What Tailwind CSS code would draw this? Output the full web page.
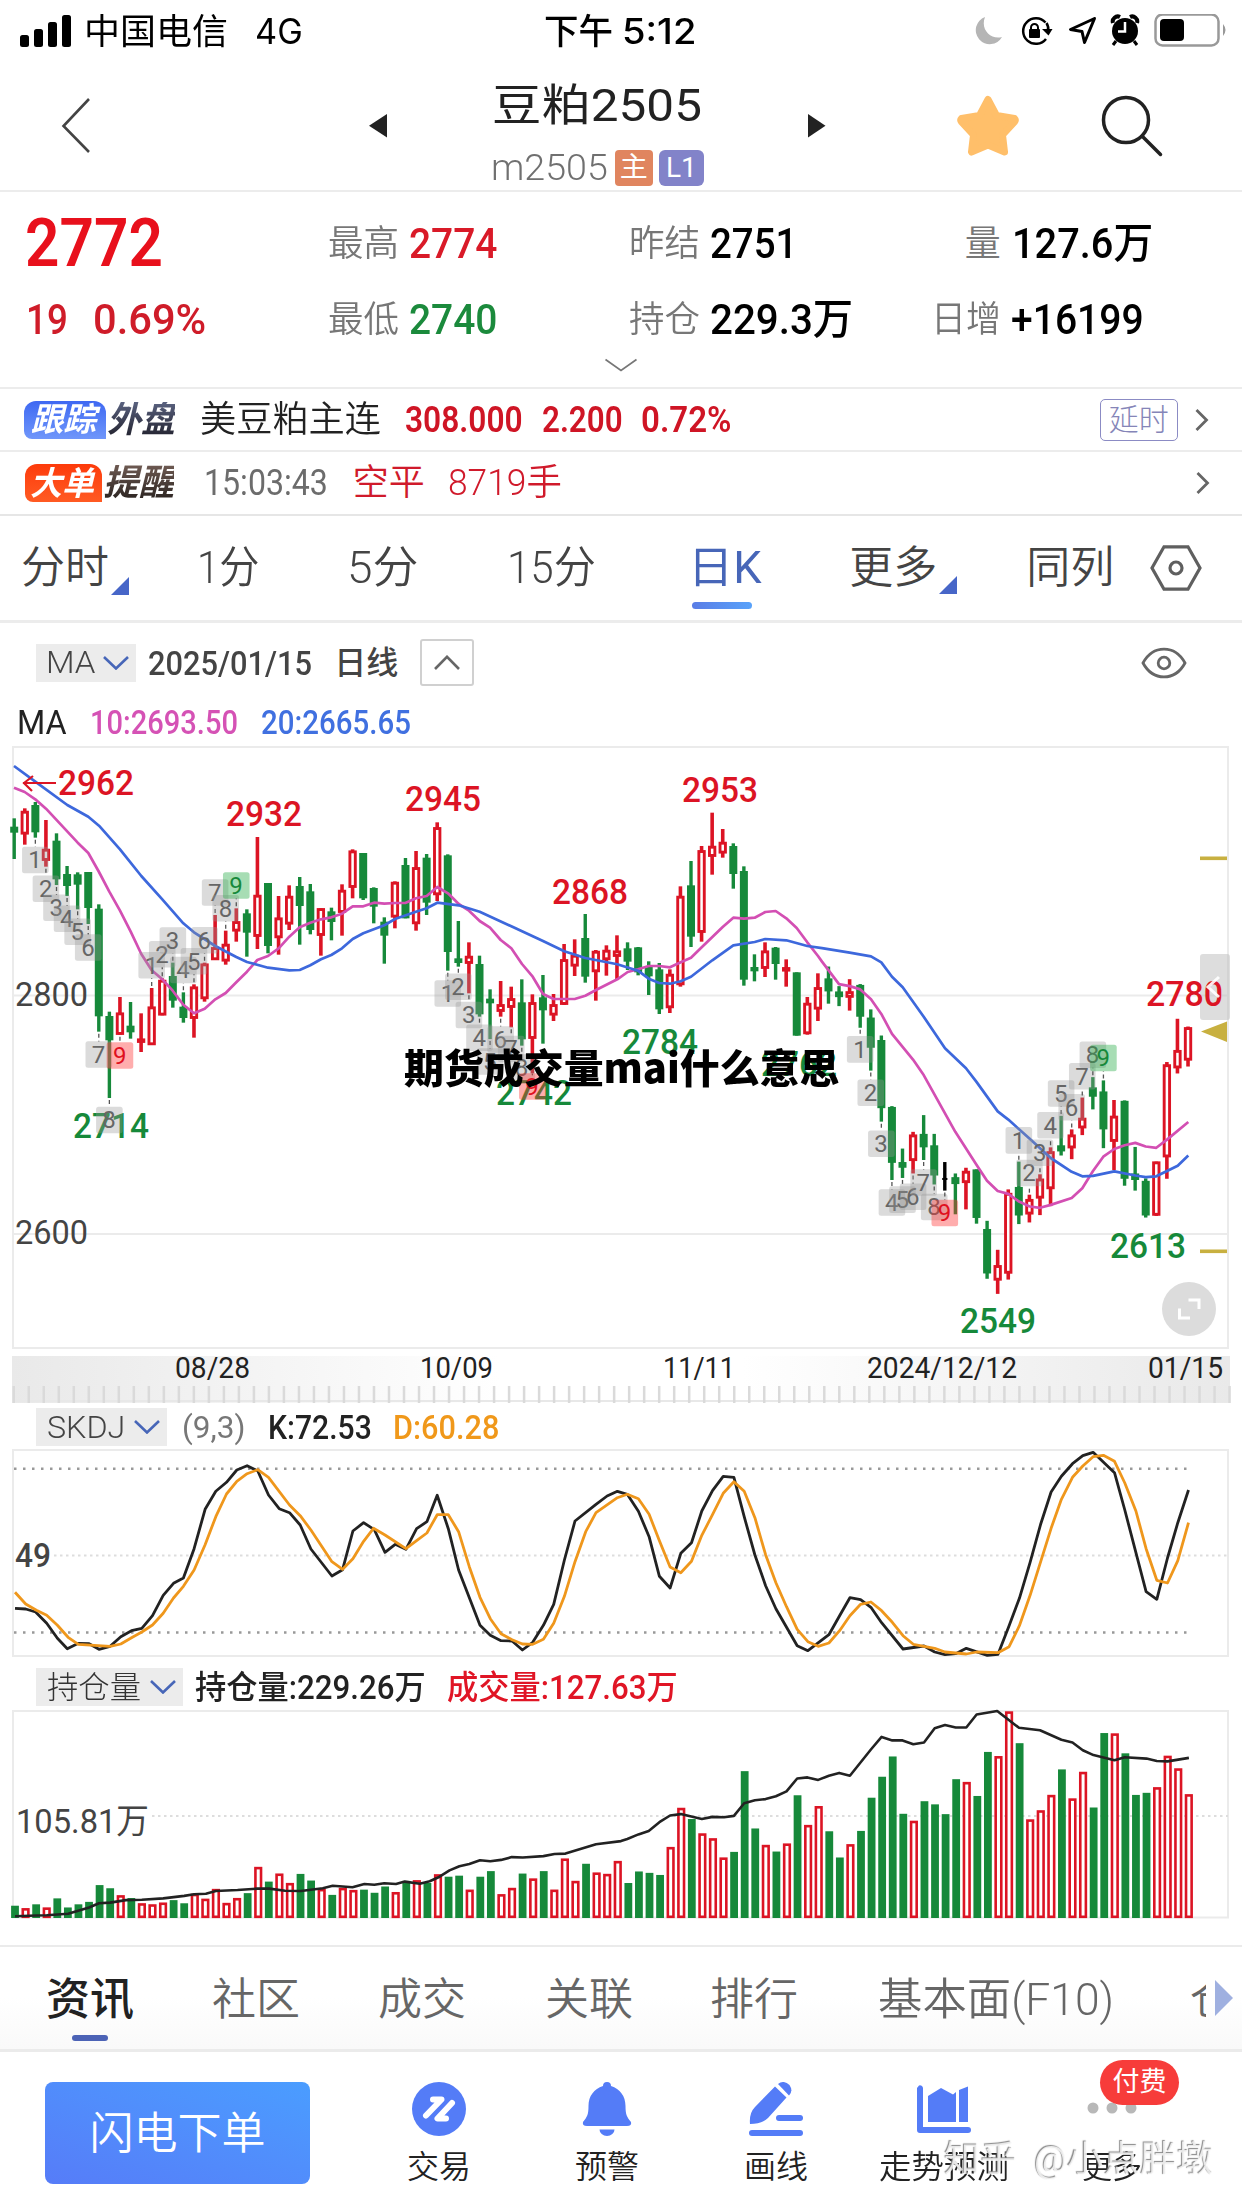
<!DOCTYPE html>
<html lang="zh-CN">
<head>
<meta charset="utf-8">
<title>豆粕2505</title>
<script src="https://cdn.jsdelivr.net/npm/@tailwindcss/browser@4"></script>
</head>
<body class="bg-white">
<div id="app" class="relative flex h-[2208px] w-[1242px] flex-col overflow-hidden bg-white font-[Roboto,'Noto_Sans_CJK_SC',sans-serif] leading-none text-[#222]">

  <!-- status bar -->
  <div class="flex h-[62px] shrink-0 items-center font-[Inter,'Noto_Sans_CJK_SC',sans-serif] text-[35px] text-black">
    <svg class="ml-5 shrink-0" width="52" height="32" viewBox="0 0 52 32"><rect x="0" y="20" width="9" height="12" rx="2.5"/><rect x="14" y="14" width="9" height="18" rx="2.5"/><rect x="28" y="7" width="9" height="25" rx="2.5"/><rect x="42" y="0" width="9" height="32" rx="2.5"/></svg>
    <span data-w="144" class="ml-[12px]">中国电信</span>
    <span data-w="48" class="ml-[27px]">4G</span>
    <span data-w="69" class="ml-[241px] font-medium">下午</span>
    <span data-w="74" class="ml-[9px] font-medium">5:12</span>
    <svg class="ml-[278px] shrink-0" width="254" height="34" viewBox="973 14 254 34">
      <path d="M984 17 A14 14 0 1 0 1001 37 C990 40 979 30 984 17Z" fill="#b5b5b5"/>
      <path d="M1044.500 22.500 A12.800 12.800 0 1 0 1045 39" fill="none" stroke="#000" stroke-width="2.500"/><path d="M1041 29h10.500l-4 6.500z"/><path d="M1045.500 23 Q1048 27 1047 31" fill="none" stroke="#000" stroke-width="2.500"/>
      <rect x="1028" y="29" width="11" height="9" rx="1"/><path d="M1030 30v-2.500a3.500 3.500 0 0 1 7 0V30" fill="none" stroke="#000" stroke-width="2"/>
      <path d="M1093.500 18.500 L1069.500 29.500 L1081 31.500 L1083.500 42.500 Z" fill="none" stroke="#000" stroke-width="3" stroke-linejoin="round"/>
      <circle cx="1124" cy="31" r="13"/><path d="M1112 23a5 5 0 0 1 7-6M1136 23a5 5 0 0 0-7-6" fill="none" stroke="#000" stroke-width="4"/><path d="M1115 41l-3 4M1133 41l3 4" stroke="#000" stroke-width="3"/><path d="M1124 22v9.500h-7" fill="none" stroke="#fff" stroke-width="2.500"/>
      <rect x="1154.500" y="14.500" width="63" height="31" rx="7" fill="none" stroke="#999" stroke-width="2.500"/><rect x="1159" y="19" width="24" height="22" rx="4"/><path d="M1222 24q5 6 0 12z" fill="#999"/>
    </svg>
  </div>

  <!-- title bar -->
  <div class="flex h-[130px] shrink-0 items-start border-b-2 border-[#ececec]">
    <svg class="ml-[58px] mt-[32px] shrink-0" width="36" height="64" viewBox="58 94 36 64"><path d="M89 99L63.500 126 89 152" fill="none" stroke="#444" stroke-width="2.600"/></svg>
    <svg class="ml-[275px] mt-[52px] shrink-0" width="18" height="24" viewBox="0 0 18 24"><path d="M18 0v23.500L0 11.700z" fill="#222"/></svg>
    <div class="ml-[104px] mt-[22px] flex w-[215px] shrink-0 flex-col items-start">
      <span data-w="210" class="ml-[1px] text-[44px] font-normal">豆粕2505</span>
      <div class="mt-[21px] flex h-[37px] items-center text-[36px] text-[#707070]">
        <span data-w="117" class="font-light">m2505</span>
        <span class="ml-[7px] flex h-[36px] w-[38px] items-center justify-center rounded-[4px] bg-[#e0855f] text-[28px] text-white">主</span>
        <span class="ml-[6px] flex h-[36px] w-[45px] items-center justify-center rounded-[6px] bg-[#8283c9] text-[28px] text-white">L1</span>
      </div>
    </div>
    <svg class="ml-[102px] mt-[52px] shrink-0" width="18" height="24" viewBox="0 0 18 24"><path d="M0 0v23.500L17.500 11.700z" fill="#222"/></svg>
    <svg class="ml-[130px] mt-[31px] shrink-0" width="64" height="66" viewBox="956 93 64 66"><path d="M988 99.500 L996.500 115.500 L1014.500 118.500 Q1016 120 1014.500 122 L1002.500 135 L1004.500 152 L988 145 L971.500 152 L973.500 135 L961.500 122 Q960 120 961.500 118.500 L979.500 115.500 Z" fill="#ffbf6a" stroke="#ffbf6a" stroke-width="7" stroke-linejoin="round"/></svg>
    <svg class="ml-[80px] mt-[31px] shrink-0" width="66" height="66" viewBox="1100 93 66 66"><circle cx="1126" cy="120" r="22.500" fill="none" stroke="#222" stroke-width="3.500"/><path d="M1142 136L1160.500 154.500" stroke="#222" stroke-width="3.500" stroke-linecap="round"/></svg>
  </div>

  <!-- quote summary -->
  <div class="flex h-[197px] shrink-0 flex-col border-b-2 border-[#ececec]">
    <div class="mt-[17px] flex h-[70px] items-center text-[42px] font-semibold">
      <span data-w="138" class="ml-[25px] text-[66px] text-[#e8101c]">2772</span>
      <span data-w="71" class="ml-[165px] text-[36px] font-[350] text-[#777]">最高</span>
      <span data-w="88" class="ml-[10px] font-medium text-[#d91a28]">2774</span>
      <span data-w="71" class="ml-[132px] text-[36px] font-[350] text-[#777]">昨结</span>
      <span data-w="87" class="ml-[10px] font-medium text-black">2751</span>
      <span data-w="36" class="ml-[167px] text-[36px] font-[350] text-[#777]">量</span>
      <span data-w="141" class="ml-[11px] font-medium text-black">127.6万</span>
    </div>
    <div class="mt-[8px] flex h-[66px] items-center text-[42px] font-medium">
      <span data-w="42" class="ml-[26px] text-[#cf1c29]">19</span>
      <span data-w="113" class="ml-[25px] text-[#cf1c29]">0.69%</span>
      <span data-w="71" class="ml-[122px] text-[36px] font-[350] text-[#777]">最低</span>
      <span data-w="88" class="ml-[10px] text-[#1b8a3c]">2740</span>
      <span data-w="71" class="ml-[132px] text-[36px] font-[350] text-[#777]">持仓</span>
      <span data-w="143" class="ml-[10px] text-black">229.3万</span>
      <span data-w="70" class="ml-[77px] text-[36px] font-[350] text-[#777]">日增</span>
      <span data-w="133" class="ml-[10px] text-black">+16199</span>
    </div>
    <svg class="ml-[604px] mt-[5px] shrink-0" width="34" height="15" viewBox="0 0 34 15"><path d="M1.500 1.500L17 12.500 32.500 1.500" fill="none" stroke="#777" stroke-width="1.700"/></svg>
  </div>

  <!-- overseas tracking -->
  <div class="flex h-[63px] shrink-0 items-center border-b-2 border-[#ececec] text-[36px]">
    <div class="ml-[24px] flex h-[38px] w-[82px] shrink-0 items-center rounded-tl-[12px] rounded-bl-[8px] rounded-tr-[12px] bg-linear-to-b from-[#3f68f2] to-[#7096fa] text-[33px] font-bold text-white"><span data-w="65" class="ml-[7px] italic">跟踪</span></div>
    <span data-w="68" class="ml-[1px] bg-linear-to-b from-[#5a6280] to-[#22222e] bg-clip-text text-[36px] font-bold text-transparent italic">外盘</span>
    <span data-w="181" class="ml-[25px] font-[350]">美豆粕主连</span>
    <span data-w="118" class="ml-[24px] font-semibold text-[#cf1525]">308.000</span>
    <span data-w="81" class="ml-[19px] font-semibold text-[#cf1525]">2.200</span>
    <span data-w="91" class="ml-[19px] font-semibold text-[#cf1525]">0.72%</span>
    <span class="ml-[368px] flex h-[42px] w-[78px] shrink-0 items-center justify-center rounded-[5px] border-[1.500px] border-[#8b8bc4] text-[30px] font-light text-[#8585b8]">延时</span>
    <svg class="ml-[17px] shrink-0" width="14" height="24" viewBox="0 0 14 24"><path d="M1.500 2L11.500 12 1.500 22" fill="none" stroke="#666" stroke-width="2.800"/></svg>
  </div>

  <!-- large orders -->
  <div class="flex h-[64px] shrink-0 items-center border-b-2 border-[#e6e6e6] text-[36px]">
    <div class="ml-[25px] flex h-[38px] w-[77px] shrink-0 items-center rounded-tl-[12px] rounded-bl-[8px] rounded-tr-[12px] bg-linear-to-b from-[#fd3a0a] to-[#ff5a22] text-[33px] font-bold text-white"><span data-w="64" class="ml-[5px] italic">大单</span></div>
    <span data-w="71" class="ml-[1px] bg-linear-to-b from-[#6e5a52] to-[#2a2320] bg-clip-text text-[36px] font-bold text-transparent italic">提醒</span>
    <span data-w="124" class="ml-[30px] text-[#6c6c6c]">15:03:43</span>
    <span data-w="72" class="ml-[25px] font-[350] text-[#d01a2b]">空平</span>
    <span data-w="114" class="ml-[23px] font-[350] text-[#d01a2b]">8719手</span>
    <svg class="ml-[634px] shrink-0" width="14" height="24" viewBox="0 0 14 24"><path d="M1.500 2L11.500 12 1.500 22" fill="none" stroke="#666" stroke-width="2.800"/></svg>
  </div>

  <!-- period tabs -->
  <div class="flex h-[107px] shrink-0 items-center border-b-[3px] border-[#ececec] text-[44px] font-[350] text-[#444]">
    <span data-w="88" class="ml-[21px]">分时</span>
    <svg class="ml-[2px] mt-[36px] shrink-0" width="18" height="18"><path d="M18 0v18H0z" fill="#4766c8"/></svg>
    <span data-w="62" class="ml-[68px]">1分</span>
    <span data-w="71" class="ml-[88px]">5分</span>
    <span data-w="89" class="ml-[88px]">15分</span>
    <div class="relative ml-[92px] shrink-0 font-normal text-[#4766b8]"><span data-w="74">日K</span><div class="absolute top-[56px] left-[4px] h-[7px] w-[60px] rounded-full bg-linear-to-r from-[#5a7de6] to-[#58a2fa]"></div></div>
    <span data-w="88" class="ml-[88px]">更多</span>
    <svg class="ml-[2px] mt-[34px] shrink-0" width="18" height="18"><path d="M18 0v18H0z" fill="#4766c8"/></svg>
    <span data-w="88" class="ml-[69px]">同列</span>
    <svg class="ml-[36px] shrink-0" width="52" height="46" viewBox="0 0 52 46"><path d="M14 1.800H38L50 23 38 44.200H14L2 23Z" fill="none" stroke="#5f5f5f" stroke-width="3.200"/><circle cx="26" cy="23" r="6" fill="none" stroke="#5f5f5f" stroke-width="3.200"/></svg>
  </div>

  <!-- chart heading -->
  <div class="flex h-[79px] shrink-0 items-center text-[34px] text-[#444]">
    <div class="ml-[36px] flex h-[38px] w-[100px] shrink-0 items-center bg-[#ececec]"><span data-w="49" class="ml-[10px] text-[31px] font-light">MA</span><svg class="ml-[8px] shrink-0" width="26" height="14" viewBox="0 0 26 14"><path d="M1 1L13 12.500 25 1" fill="none" stroke="#4766b8" stroke-width="2.600"/></svg></div>
    <span data-w="164" class="ml-[12px] font-medium">2025/01/15</span>
    <span data-w="64" class="ml-[22px] text-[32px] font-medium">日线</span>
    <span class="ml-[22px] flex h-[47px] w-[54px] shrink-0 items-center justify-center rounded-[3px] border-2 border-[#d0d0d0]"><svg width="26" height="15" viewBox="0 0 26 15"><path d="M1 14L13 1.800 25 14" fill="none" stroke="#666" stroke-width="2.600"/></svg></span>
    <svg class="ml-[667px] shrink-0" width="46" height="32" viewBox="0 0 46 32"><path d="M2 16C12-2.500 34-2.500 44 16C34 34.500 12 34.500 2 16Z" fill="none" stroke="#666" stroke-width="2.800"/><circle cx="23" cy="16" r="5.800" fill="none" stroke="#666" stroke-width="2.800"/></svg>
  </div>
  <div class="mb-[4px] flex h-[40px] shrink-0 items-center text-[33px]">
    <span data-w="50" class="ml-[17px]">MA</span>
    <span data-w="148" class="ml-[23px] font-medium text-[#d552b5]">10:2693.50</span>
    <span data-w="150" class="ml-[23px] font-medium text-[#4070e0]">20:2665.65</span>
  </div>

  <!-- candlestick panel, date ruler -->
  <svg id="main" class="block shrink-0" width="1242" height="661" viewBox="0 746 1242 661"></svg>

  <!-- SKDJ -->
  <div class="flex h-[40px] shrink-0 items-center text-[33px]">
    <div class="ml-[36px] flex h-[38px] w-[131px] shrink-0 items-center bg-[#ececec] text-[#444]"><span data-w="78" class="ml-[11px] text-[31px] font-light">SKDJ</span><svg class="ml-[9px] shrink-0" width="26" height="14" viewBox="0 0 26 14"><path d="M1 1L13 12.500 25 1" fill="none" stroke="#4766b8" stroke-width="2.600"/></svg></div>
    <span data-w="63" class="ml-[15px] text-[31px] text-[#777]">(9,3)</span>
    <span data-w="104" class="ml-[23px] font-medium">K:72.53</span>
    <span data-w="106" class="ml-[21px] font-medium text-[#f0981a]">D:60.28</span>
  </div>
  <svg id="skdj" class="block shrink-0" width="1242" height="220" viewBox="0 1447 1242 220"></svg>

  <!-- open interest / volume -->
  <div class="flex h-[40px] shrink-0 items-center text-[33px]">
    <div class="ml-[36px] flex h-[38px] w-[147px] shrink-0 items-center bg-[#ececec] text-[#333]"><span data-w="94" class="ml-[11px] text-[31px] font-light">持仓量</span><svg class="ml-[9px] shrink-0" width="26" height="14" viewBox="0 0 26 14"><path d="M1 1L13 12.500 25 1" fill="none" stroke="#4766b8" stroke-width="2.600"/></svg></div>
    <span data-w="231" class="ml-[12px] font-medium">持仓量:229.26万</span>
    <span data-w="231" class="ml-[21px] font-medium text-[#e01525]">成交量:127.63万</span>
  </div>
  <svg id="vol" class="block shrink-0" width="1242" height="238" viewBox="0 1707 1242 238"></svg>

  <!-- section tabs -->
  <div class="relative flex h-[107px] shrink-0 items-center border-t-2 border-b-[3px] border-[#ebebeb] bg-linear-to-b from-white from-50% to-[#f9f9f9] pt-[4px] text-[44px] font-[350] text-[#666]">
    <span data-w="88" class="ml-[46px] font-medium text-[#222]">资讯</span>
    <span data-w="88" class="ml-[78px]">社区</span>
    <span data-w="88" class="ml-[78px]">成交</span>
    <span data-w="88" class="ml-[79px]">关联</span>
    <span data-w="88" class="ml-[77px]">排行</span>
    <span data-w="236" class="ml-[80px]">基本面(F10)</span>
    <span class="ml-[76px] w-[16px] shrink-0 overflow-hidden whitespace-nowrap">仓</span>
    <svg class="-mt-[4px] ml-[9px] shrink-0" width="18" height="36" viewBox="0 0 18 36"><path d="M0 0L18 18 0 36z" fill="#9fb0e0"/></svg>
    <div class="absolute bottom-[8px] left-[72px] h-[6px] w-[36px] rounded-full bg-[#4c63b6]"></div>
  </div>

  <!-- bottom actions -->
  <div class="flex h-[157px] shrink-0 items-start text-[32px] text-[#222]">
    <div class="ml-[45px] mt-[30px] flex h-[102px] w-[265px] shrink-0 items-center justify-center rounded-[8px] bg-linear-to-tr from-[#567cf8] to-[#4a9dff] pt-[2px] text-[44px] font-[350] text-white">闪电下单</div>
    <div class="ml-[89px] mt-[30px] flex w-[80px] shrink-0 flex-col items-center">
      <svg width="54" height="54" viewBox="412 2082 54 54"><circle cx="439" cy="2109" r="27" fill="#547cf7"/><path d="M433 2099.500H441.500L426 2115.500M452 2103L437.500 2118.500H446" fill="none" stroke="#fff" stroke-width="6" stroke-linecap="round" stroke-linejoin="round"/></svg>
      <span class="mt-[15px] font-[350]">交易</span>
    </div>
    <div class="ml-[88px] mt-[30px] flex w-[80px] shrink-0 flex-col items-center">
      <svg width="50" height="54" viewBox="0 0 50 54"><path d="M21 4a4 4 0 0 1 8 0C38 7 43.500 14 43.500 24C43.500 33 45 35 49 40Q50 44 45 44H5Q0 44 1 40C5 35 6.500 33 6.500 24C6.500 14 12 7 21 4Z" fill="#547cf7"/><path d="M17.500 47.500h15a7.500 6.500 0 0 1-15 0z" fill="#547cf7"/></svg>
      <span class="mt-[15px] font-[350]">预警</span>
    </div>
    <div class="ml-[89px] mt-[30px] flex w-[80px] shrink-0 flex-col items-center">
      <svg width="54" height="54" viewBox="749 2082 54 54"><g fill="#547cf7"><path d="M775 2086.500L786.500 2097.500L768 2118Q762 2124 750 2124Q749 2113 755 2107Z"/><path d="M778 2084Q784 2079.500 789.500 2085Q793.500 2091 789 2095.500Z"/><rect x="776" y="2115" width="27" height="6" rx="3"/><rect x="749" y="2130" width="54" height="6" rx="3"/></g></svg>
      <span class="mt-[15px] font-[350]">画线</span>
    </div>
    <div class="ml-[58px] mt-[30px] flex w-[140px] shrink-0 flex-col items-center">
      <svg width="54" height="54" viewBox="917 2082 54 54"><g fill="#547cf7"><path d="M919 2085.500a3 3 0 0 1 4 2.500v39h45a3 3 0 0 1 0 6H920a3 3 0 0 1-3-3v-42z"/><path d="M928 2096L941 2088 953 2094.500 956 2092V2122H928z"/><path d="M959 2090L968 2086.500V2122H959z"/></g></svg>
      <span data-w="130" class="mt-[15px] font-[350]">走势预测</span>
    </div>
    <div class="relative ml-[58px] mt-[30px] flex w-[80px] shrink-0 flex-col items-center">
      <svg width="54" height="54" viewBox="0 0 54 54"><g fill="#b8b8b8"><circle cx="8" cy="26" r="5.500"/><circle cx="27" cy="26" r="5.500"/><circle cx="46" cy="26" r="5.500"/></g></svg>
      <span data-w="60" class="mt-[15px] font-[350]">更多</span>
      <span class="absolute -top-[22px] left-[28px] flex h-[45px] w-[79px] items-center justify-center rounded-full bg-[#f73c3a] text-[27px] text-white">付费</span>
    </div>
  </div>

  <!-- overlays -->
  <div class="absolute top-[1046px] left-[404px] font-['Noto_Sans_CJK_SC',sans-serif] text-[40px] leading-[40px] font-black whitespace-nowrap text-black"><span data-w="435">期货成交量mai什么意思</span></div>
  <div class="absolute top-[2140px] left-[944px] flex text-[36px] leading-[40px] whitespace-nowrap text-white/80 [text-shadow:-1px_-1px_1px_#8a8a8a]"><span data-w="73">知乎</span><span data-w="179" class="ml-[17px]">@小点胖墩</span></div>
</div>

<script>
// Squeeze each label horizontally to its column width, again whenever its natural width changes.
function fit(el) {
  var w = +el.dataset.w, n = el.offsetWidth, p = getComputedStyle(el.parentNode);
  if (!n) return;
  var centred = p.alignItems === 'center' && p.flexDirection === 'column';
  el.style.transformOrigin = centred ? 'center' : 'left';
  el.style.transform = 'scaleX(' + w / n + ')';
  el.style.marginRight = centred ? '' : (w - n) + 'px';
}
var watcher = new ResizeObserver(function (list) { list.forEach(function (e) { fit(e.target); }); });
var labels = document.querySelectorAll('[data-w]');
labels.forEach(function (el) {
  el.style.display = 'inline-block';
  el.style.whiteSpace = 'nowrap';
  el.style.flexShrink = '0';
  watcher.observe(el);
});
window.addEventListener('load', function () { labels.forEach(fit); });

var RED = '#dc1424', GREEN = '#16893a', X0 = 14.2, DX = 10.575;
function rect(x, y, w, h, a) { return '<rect x="' + x + '" y="' + y + '" width="' + w + '" height="' + h + '" ' + a + '/>'; }
function line(x1, y1, x2, y2, a) { return '<path d="M' + x1 + ' ' + y1 + 'L' + x2 + ' ' + y2 + '" ' + a + '/>'; }
function text(s, x, y, w, size, a) { return '<text x="' + x + '" y="' + (y + size * 0.35) + '" textLength="' + w + '" lengthAdjust="spacingAndGlyphs" font-size="' + size + '" ' + a + '>' + s + '</text>'; }
function pts(s, ox, sx, oy, sy) { return s.split(' ').map(function (p) { p = p.split(','); return (ox + p[0] / sx).toFixed(1) + ',' + (oy + p[1] / sy).toFixed(1); }).join(' '); }
function poly(p, c, w) { return '<polyline points="' + p + '" fill="none" stroke="' + c + '" stroke-width="' + w + '" stroke-linejoin="round"/>'; }

// ---- candles: colour, high, body top, body bottom, low
var A = 'g235 260 278 357|r205 213 283 314|g186 195 277 293|r240 327 362 380|g280 302 418 435|g378 402 438 468|g397 403 434 508|g396 396 504 552|g493 506 829 875|g815 828 901 1074|r771 818 884 884|g786 857 877 896|r820 896 908 936|r744 800 915 915|r715 720 826 826|g668 708 782 803|g757 800 834 848|r733 740 836 893|r668 671 777 785|r525 622 660 660|r572 612 664 674|r505 544 574 605|g508 520 578 650|r291 465 590 627|g429 429 618 640|r468 533 594 644|r436 468 553 570|g411 438 498 614|g432 454 570 583|r505 505 587 647|g503 514 546 601|r433 450 518 587|r328 332 443 475|g339 339 475 480|g442 444 500 550|g532 545 587 671|r424 426 532 565|g354 375 535 535|r333 382 552 572|g342 353 488 525|r247 262 465 483|g343 346 636 692|g543 655 669 680|r607 648 671 760|g647 672 823 830|g748 776 790 897|r723 793 815 830|r740 775 803 862|g718 787 898 917|r763 787 896 1000|g705 772 811 911|r762 793 826 843|r612 658 794 795|r598 645 679 708|g522 594 710 728|r630 633 696 782|r616 630 660 707|r586 632 650 717|g607 625 665 690|g621 622 697 706|g664 680 709 765|g669 688 808 822|r688 702 804 819|r439 468 735 740|g363 436 590 621|r318 331 578 605|r218 318 350 404|r267 306 340 353|g310 318 402 446|g379 393 719 737|g643 681 694 724|r607 632 686 711|g621 623 672 719|r658 682 694 740|g697 697 887 887|r771 789 882 884|r700 742 808 843';
var B = 'g555 584 616 646|g603 616 630 652|r586 616 631 663|g598 600 678 705|g660 680 754 810|g724 735 902 935|g897 899 1036 1078|g1001 1034 1048 1073|r960 967 1031 1062|g919 965 998 1029|g965 993 1067 1089|k1034 1073 1076 1104|g1062 1071 1088 1162|r1048 1056 1085 1150|g1052 1052 1171 1185|g1178 1198 1307 1320|r1249 1287 1324 1357|r1101 1110 1307 1322|g1033 1095 1165 1186|r1114 1125 1162 1182|r1064 1075 1123 1164|r998 1008 1100 1142|g921 993 1008 1018|r954 967 1000 1027|r876 926 951 968|g826 851 874 905|g834 861 954 1000|r882 921 984 1054|g883 884 1075 1092|g997 1062 1078 1104|g1074 1080 1165 1170|r1033 1033 1165 1166|r789 795 1022 1075|r683 760 804 817|r702 704 785 800';
var candles = [];
[[A, 3], [B, 2.45]].forEach(function (g) {
  g[0].split('|').forEach(function (c) {
    var v = c.slice(1).split(' ').map(function (n) { return 740 + n / g[1]; });
    candles.push([c[0], v[0], v[1], v[2], v[3]]);
  });
});
var h = '', LG = 'stroke="#ebebeb" stroke-width="2" fill="none"';
h += rect(13, 747, 1215, 601, LG) + line(13, 995.5, 1228, 995.5, LG) + line(13, 1234, 1228, 1234, LG);
h += text('2800', 15, 994, 73, 34, 'fill="#444"') + text('2600', 15, 1232, 73, 34, 'fill="#444"');

// price marks
[['2962', 58, 783, RED], ['2932', 226, 814, RED], ['2945', 405, 799, RED], ['2953', 682, 790, RED], ['2868', 552, 892, RED], ['2784', 622, 1042, GREEN], ['2762', 761, 1064, GREEN], ['2742', 496, 1093, GREEN], ['2714', 73, 1126, GREEN], ['2613', 1110, 1246, GREEN], ['2549', 960, 1321, GREEN]].forEach(function (m) {
  h += text(m[0], m[1], m[2], 76, 35, 'font-weight="500" fill="' + m[3] + '"');
});

candles.forEach(function (c, i) {
  var x = X0 + DX * i, col = c[0] === 'r' ? RED : c[0] === 'g' ? GREEN : '#000', b = Math.max(c[3] - c[2], 2);
  if (c[0] === 'r') {
    h += line(x, c[1], x, c[2] + 1, 'stroke="' + col + '" stroke-width="3.6"') + line(x, c[3] - 1, x, c[4], 'stroke="' + col + '" stroke-width="3.6"');
    h += rect(x - 2.7, c[2] + 1.2, 5.4, Math.max(b - 2.4, 1), 'fill="#fff" stroke="' + col + '" stroke-width="2.9"');
  } else {
    var half = c[0] === 'k' ? 2.6 : 4;
    h += line(x, c[1], x, c[4], 'stroke="' + col + '" stroke-width="3.4"') + rect(x - half, c[2], half * 2, b, 'fill="' + col + '"');
  }
});

h += poly(pts('42,143 74,156 106,178 138,206 233,308 265,339 297,396 328,455 360,512 392,575 424,642 455,691 487,718 518,752 550,794 582,820 614,806 646,778 677,759 709,727 741,695 772,660 804,648 836,625 868,590 899,562 931,548 963,538 994,532 1026,521 1058,499 1090,499 1122,488 1153,491 1185,489 1216,489 1248,475', 0, 3, 740, 3) + ' ' +
  pts('50,468 82,441 114,460 146,492 177,512 209,543 240,563 272,600 304,625 336,672 368,710 399,762 431,777 494,777 526,767 558,750 622,718 653,696 684,688 716,678 748,678 780,682 812,667 843,653 875,622 938,561 970,533 1002,536 1034,533 1066,516 1097,513 1129,535 1160,564 1192,607 1224,648', 410, 3, 740, 3) + ' ' +
  pts('0,543 51,598 83,603 115,611 147,635 178,671 210,720 273,783 305,821 400,960 463,1040 495,1080 527,1105 559,1112 591,1131 623,1143 654,1146 686,1139 749,1122 781,1098 813,1056 844,1021 877,1002 908,993 940,987 971,996 1003,999 1035,979 1099,936', 822, 3, 740, 2.45), '#d34fb3', 2.7);
h += poly(pts('42,78 106,125 202,195 265,230 297,257 360,328 424,408 487,478 550,550 582,577 646,618 709,651 741,666 804,683 868,691 899,690 931,676 963,658 994,645 1026,625 1058,597 1090,580 1153,556 1185,537 1248,515', 0, 3, 740, 3) + ' ' +
  pts('50,505 82,488 146,496 209,515 304,559 399,603 463,634 526,654 622,673 684,692 716,716 748,729 780,731 812,724 843,710 907,661 970,616 1034,606 1066,597 1129,601 1192,618', 410, 3, 740, 3) + ' ' +
  pts('0,510 83,521 147,530 178,545 210,580 242,606 305,678 369,755 432,804 463,837 527,910 559,930 623,977 686,1024 749,1058 781,1069 813,1068 877,1057 940,1067 971,1071 1003,1069 1067,1043 1099,1018', 822, 3, 740, 2.45), '#3d68dc', 2.7);
h += '<path d="M56 783H23M33 776L24 783L32 791" fill="none" stroke="' + RED + '" stroke-width="2.2"/>';

// sequence counters: first candle index, centre heights, colour of the ninth
[[2, [860, 888.7, 907.7, 918.7, 931.7, 947.5, 1054.5, 1120, 1055.5], 'r'],
 [13, [965.3, 954.3, 940.5, 970, 961.3, 940.3, 892.5, 908.3, 885.5], 'g'],
 [41, [993.5, 986.7, 1015, 1037.7, 1061.5, 1039.5, 1049, 1067.5, 1086.5], 'r'],
 [80, [1049.4, 1092.7, 1143.7, 1202.5, 1199.6, 1196.7, 1182.5, 1207, 1213], 'r'],
 [95, [1140.4, 1173, 1152.7, 1125.3, 1093.5, 1107.3, 1076.3, 1054.7, 1058], 'g']].forEach(function (g) {
  g[1].forEach(function (y, k) {
    var i = g[0] + k, x = X0 + DX * i, nine = k === 8, c = candles[i];
    var below = y > c[4];
    h += line(x, below ? c[4] + 2 : c[1] - 2, x, below ? y - 13 : y + 13, 'stroke="#555" stroke-width="1.3" stroke-dasharray="4 3"');
    h += rect(x - 13.3, y - 13.3, 26.6, 26.6, 'rx="2.500" fill="' + (!nine ? '#999' : g[2] === 'r' ? '#f33' : '#2a4') + '" fill-opacity="' + (nine ? 0.4 : 0.35) + '"');
    h += '<text x="' + (x - 0.3) + '" y="' + (y + 8.3) + '" text-anchor="middle" font-size="24" fill="' + (!nine ? '#666' : g[2] === 'r' ? '#e01020' : GREEN) + '">' + (k + 1) + '</text>';
  });
});

// right-hand handles
h += rect(1200, 856.5, 27, 3.6, 'fill="#c8b040"') + rect(1200, 1249.500, 27, 3.6, 'fill="#c8b040"') + '<path d="M1201 1031.500L1227 1021.500V1042z" fill="#c8b040"/>';
h += rect(1200, 954, 30, 66, 'rx="3" fill="#bbb" fill-opacity=".5"');
h += text('2780', 1146, 994, 77, 35, 'font-weight="500" fill="' + RED + '"');
h += '<path d="M1219 977L1208 987L1219 997" fill="none" stroke="#fff" stroke-opacity=".9" stroke-width="3"/>';
h += '<circle cx="1189" cy="1309" r="27" fill="#dcdcdc"/><path d="M1188.500 1300H1199V1309M1179.500 1308.500V1318H1190" fill="none" stroke="#fff" stroke-width="3"/>';

// date ruler
h += '<defs><linearGradient id="rule"><stop offset="0" stop-color="#e9e9e9"/><stop offset=".4" stop-color="#fff"/><stop offset=".6" stop-color="#fff"/><stop offset="1" stop-color="#e9e9e9"/></linearGradient></defs>';
h += rect(12, 1356, 1218, 47, 'fill="url(#rule)"') + line(12, 1401, 1230, 1401, 'stroke="#e8e8e8" stroke-width="2"');
for (var t = 0; t < 82; t++) h += rect(12.5 + t * 15.01, 1386, 2.500, 17, 'fill="#dadada"');
[['08/28', 175, 75], ['10/09', 420, 73], ['11/11', 663, 72], ['2024/12/12', 867, 150], ['01/15', 1148, 75]].forEach(function (d) {
  h += text(d[0], d[1], 1367.5, d[2], 29, 'fill="#222"');
});
document.getElementById('main').innerHTML = h;

// ---- SKDJ
h = rect(13, 1450, 1215, 206, LG);
var DOT = 'stroke="#999" stroke-width="2.500" stroke-dasharray="2.500 6.5"';
h += line(14, 1468.700, 1189, 1468.700, DOT) + line(14, 1632.500, 1189, 1632.500, DOT);
h += line(54, 1555.500, 1228, 1555.500, 'stroke="#ddd" stroke-width="2" stroke-dasharray="2.500 3.5"');
h += text('49', 15, 1555, 36, 34, 'fill="#444" font-weight="500"');
h += poly(pts('38,805 65,807 90,816 118,850 145,895 170,926 198,910 225,911 250,928 278,919 305,890 332,872 358,865 385,827 412,766 438,730 463,714 490,626 518,508 545,454 572,427 598,390 624,377 651,393 678,465 705,506 731,518 758,555 785,627 838,708 865,689 891,573 918,548 945,569 972,637 998,613 1025,628 1052,566 1078,545 1104,466 1132,566 1158,690 1212,856 1238,886 1265,902 1293,903 1319,930 1345,907 1372,856 1398,793 1425,660 1452,543 1505,493 1533,468 1559,454', 0, 2.525, 1340, 3) + ' ' +
  pts('16,463 44,514 71,590 97,709 124,744 151,640 178,608 204,513 231,452 258,409 285,412 311,530 338,645 365,737 391,806 445,917 472,932 525,884 552,827 578,773 605,779 631,802 658,848 712,927 765,918 792,936 818,944 845,941 872,925 925,946 952,943 980,857 1006,775 1033,667 1060,551 1086,456 1112,409 1140,371 1166,347 1192,337 1246,398 1272,510 1326,755 1353,778 1380,654 1406,548 1433,450', 621, 2.525, 1340, 3), '#222', 2.8);
h += poly(pts('38,757 65,792 92,811 118,826 145,856 172,892 198,913 278,919 305,912 332,893 358,876 385,855 412,820 438,774 463,739 490,690 518,614 545,530 572,462 598,424 624,401 651,389 678,412 731,495 758,527 785,570 838,665 865,688 891,656 918,604 943,565 972,585 1025,626 1052,602 1078,579 1104,524 1132,524 1158,575 1185,680 1212,772 1238,836 1265,881 1293,899 1319,912 1345,913 1372,898 1398,850 1425,769 1452,665 1479,575 1505,518 1559,473', 0, 2.525, 1340, 3) + ' ' +
  pts('16,463 44,476 71,523 97,602 124,681 151,698 178,664 204,586 231,524 258,460 285,425 311,454 338,533 365,644 391,728 418,800 445,868 472,905 498,919 525,909 552,872 578,827 605,793 631,786 658,812 685,847 712,887 738,913 792,925 818,936 872,942 898,936 952,938 980,920 1006,857 1033,766 1086,565 1112,478 1140,412 1166,378 1192,350 1218,346 1246,364 1272,429 1300,513 1326,626 1353,721 1380,729 1406,662 1433,548', 621, 2.525, 1340, 3), '#ef971c', 2.8);
document.getElementById('skdj').innerHTML = h;

// ---- volume and open interest
h = rect(13, 1711, 1215, 206.500, LG);
h += line(152, 1816, 1228, 1816, 'stroke="#ddd" stroke-width="2" stroke-dasharray="2.500 3.5"');
h += text('105.81万', 16, 1821.5, 133, 34, 'fill="#444"');
var V = 'g703 r710 g699 r708 g682 g708 g699 g692 g644 g653 r673 g681 r696 r699 r694 g687 g696 r669 r683 r655 r695 r681 g667 r592 g634 r611 r638 g612 g631 r655 g672 r652 r658 g657 g666 g648 r664 g632 r630 g638 r613 g620 g617 r657 g620 g604 r670 r652 g611 r625 g604 r657 r568 r632 g583 r608 r612 r575 g638 g605 g609 g615 r535 r423 g455 r496 r510 r565 g549 g318 g482 r529 g548 r525 g387 r472 r418 g490 g565 r527 g489 g394 g334 g276 g440 r460 g404 g413 g441 g341 r349 g389 g263 r275 r147 g238 r456 r430 r386 g313 r396 r320 g422 g209 r210 g267 g386 g380 r364 r274 r310 r384';
V.split(' ').forEach(function (b, i) {
  var x = X0 + DX * i + 0.8, y = 1660 + b.slice(1) / 2.861;
  h += b[0] === 'g' ? rect(x - 3.9, y, 7.8, 1918 - y, 'fill="' + GREEN + '"') : rect(x - 2.8, y + 1.2, 5.6, 1918 - y - 2.4, 'fill="#fff" stroke="' + RED + '" stroke-width="2.6"');
});
h += poly(pts('38,733 92,731 118,730 172,726 225,708 250,696 278,694 318,687 358,686 412,682 465,675 490,670 520,669 545,661 600,658 650,654 680,654 720,660 760,661 815,653 840,646 890,650 920,641 945,643 970,639 1000,641 1022,634 1060,640 1085,633 1110,620 1135,602 1160,590 1185,584 1212,573 1238,576 1265,572 1292,564 1320,565 1372,561 1400,555 1428,554 1505,527 1568,518', 0, 2.525, 1660, 2.861) + ' ' +
  pts('16,512 44,499 70,489 97,464 124,445 151,441 204,455 231,449 260,450 285,446 311,410 338,401 365,398 391,390 418,376 445,339 471,336 498,343 525,331 551,323 578,331 631,256 658,220 685,230 711,230 738,241 765,236 792,195 818,186 845,193 872,193 898,156 950,146 1005,194 1058,201 1112,228 1140,236 1166,258 1193,272 1246,287 1272,278 1327,282 1353,289 1380,290 1434,280', 621, 2.525, 1660, 2.861), '#222', 2.6);
document.getElementById('vol').innerHTML = h;
</script>
</body>
</html>
